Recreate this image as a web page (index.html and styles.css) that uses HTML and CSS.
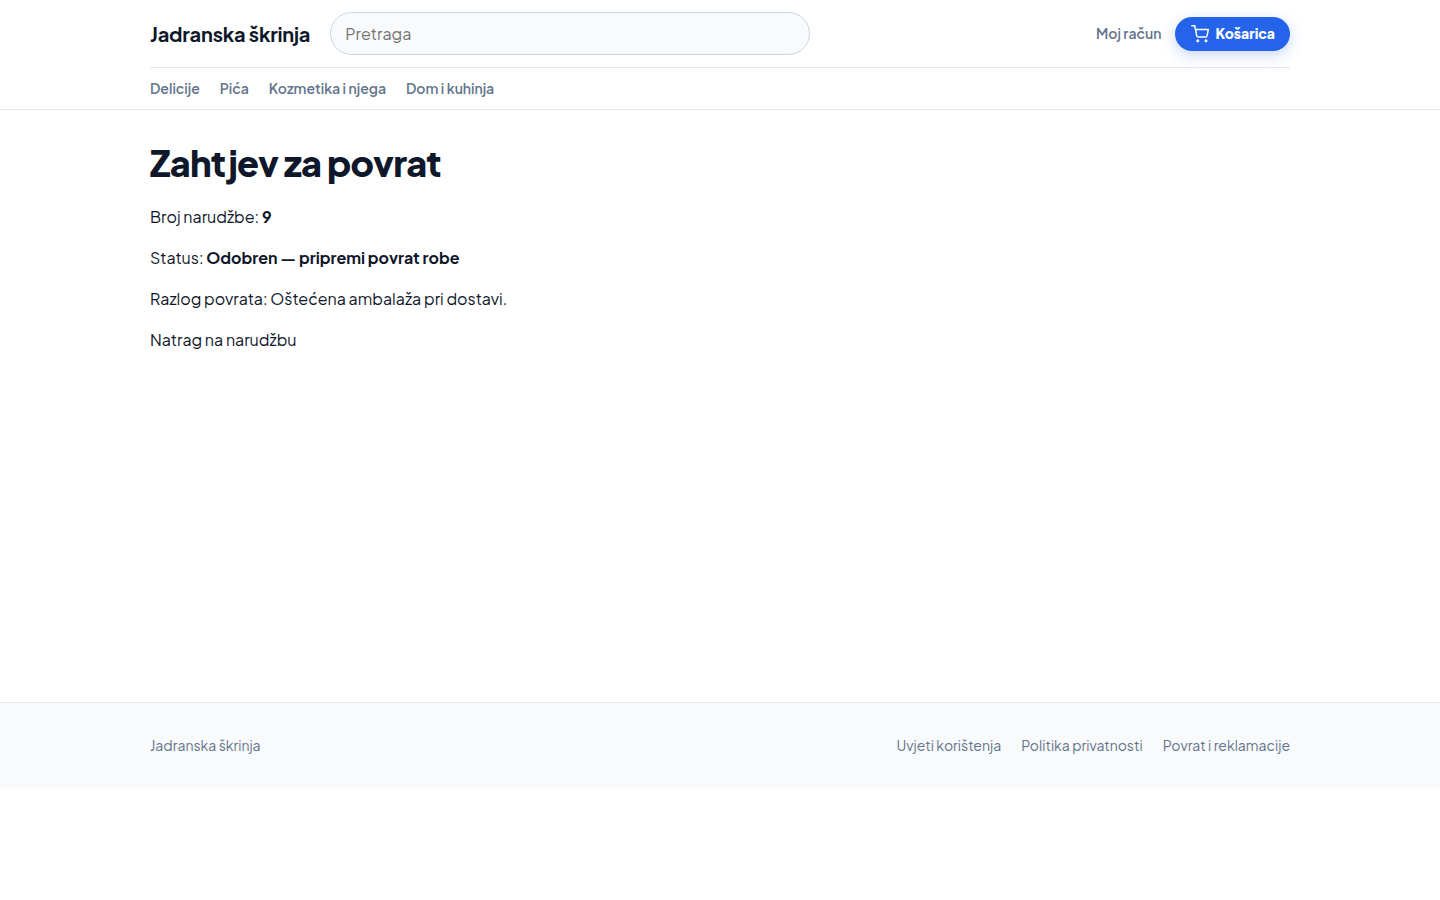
FILE: index.html
```html
<!DOCTYPE html>
<html lang="hr">
<head>
  <meta charset="UTF-8">
  <meta name="viewport" content="width=device-width, initial-scale=1">
  <title>Zahtjev za povrat - Jadranska škrinja</title>
  <link rel="stylesheet" href="styles.css">
</head>
<body>
  <header class="site-header">
    <div class="container">
      <div class="header-top">
        <a class="brand" href="#">Jadranska škrinja</a>
        <form class="search" role="search">
          <input class="search-input" type="search" name="q" placeholder="Pretraga" aria-label="Pretraga">
        </form>
        <div class="header-actions">
          <a class="account-link" href="#">Moj račun</a>
          <a class="cart-button" href="#">
            <svg class="cart-icon" viewBox="0 0 24 24" fill="none" stroke="currentColor" stroke-width="2" stroke-linecap="round" stroke-linejoin="round" aria-hidden="true">
              <circle cx="9" cy="21" r="1"/>
              <circle cx="20" cy="21" r="1"/>
              <path d="M1 1h4l2.68 13.39a2 2 0 0 0 2 1.61h9.72a2 2 0 0 0 2-1.61L23 6H6"/>
            </svg>
            <span>Košarica</span>
          </a>
        </div>
      </div>
      <nav class="category-nav" aria-label="Kategorije">
        <a href="#">Delicije</a>
        <a href="#">Pića</a>
        <a href="#">Kozmetika i njega</a>
        <a href="#">Dom i kuhinja</a>
      </nav>
    </div>
  </header>

  <main class="site-main container">
    <h1>Zahtjev za povrat</h1>
    <p>Broj narudžbe: <strong>9</strong></p>
    <p>Status: <strong>Odobren — pripremi povrat robe</strong></p>
    <p>Razlog povrata: Oštećena ambalaža pri dostavi.</p>
    <p><a href="#">Natrag na narudžbu</a></p>
  </main>

  <footer class="site-footer">
    <div class="container footer-row">
      <span>Jadranska škrinja</span>
      <nav class="footer-links" aria-label="Podnožje">
        <a href="#">Uvjeti korištenja</a>
        <a href="#">Politika privatnosti</a>
        <a href="#">Povrat i reklamacije</a>
      </nav>
    </div>
  </footer>
</body>
</html>
```
FILE: styles.css
```css
* {
  box-sizing: border-box;
}

body {
  margin: 0;
  font-family: 'Plus Jakarta Sans', Inter, sans-serif;
  font-size: 16px;
  line-height: 25px;
  color: #0f172a;
  background: #fff;
}

a {
  color: inherit;
  text-decoration: none;
}

.container {
  width: 100%;
  max-width: 1180px;
  margin: 0 auto;
  padding: 0 20px;
}

/* Header */
.site-header {
  border-bottom: 1px solid #e2e8f0;
}

.header-top {
  display: flex;
  align-items: center;
  gap: 20px;
  padding: 12px 0;
}

.brand {
  font-size: 20px;
  font-weight: 700;
  letter-spacing: -0.01em;
}

.search {
  flex: 0 1 480px;
}

.search-input {
  display: block;
  width: 100%;
  height: 43px;
  padding: 0 14px;
  font: inherit;
  color: inherit;
  background: #f8fafc;
  border: 1px solid #cbd5e1;
  border-radius: 999px;
  appearance: none;
}

.search-input::placeholder {
  color: #757575;
}

.header-actions {
  display: flex;
  align-items: center;
  gap: 14px;
  margin-left: auto;
  font-size: 14px;
}

.account-link {
  font-weight: 600;
  color: #64748b;
}

.cart-button {
  display: flex;
  align-items: center;
  gap: 6px;
  height: 34px;
  padding: 0 15px 0 16px;
  font-weight: 800;
  color: #fff;
  background: #2563eb;
  border-radius: 999px;
  box-shadow: 0 4px 14px rgba(37, 99, 235, 0.25);
}

.cart-icon {
  width: 18px;
  height: 18px;
}

.category-nav {
  display: flex;
  flex-wrap: wrap;
  gap: 8px 20px;
  padding: 10px 0;
  border-top: 1px solid #e2e8f0;
  font-size: 14px;
  line-height: 21px;
  font-weight: 600;
  color: #64748b;
}

/* Content */
.site-main {
  min-height: 592px;
  padding-top: 32px;
  padding-bottom: 32px;
}

h1 {
  margin: 0 0 20px;
  font-size: 36px;
  line-height: 42px;
  font-weight: 800;
  letter-spacing: -0.02em;
}

p {
  margin: 0 0 16px;
}

/* Footer */
.site-footer {
  padding: 32px 0;
  font-size: 14px;
  line-height: 21px;
  color: #64748b;
  background: #f8fafc;
  border-top: 1px solid #e2e8f0;
}

.footer-row {
  display: flex;
  flex-wrap: wrap;
  justify-content: space-between;
  gap: 12px 20px;
}

.footer-links {
  display: flex;
  flex-wrap: wrap;
  gap: 8px 20px;
}
```
